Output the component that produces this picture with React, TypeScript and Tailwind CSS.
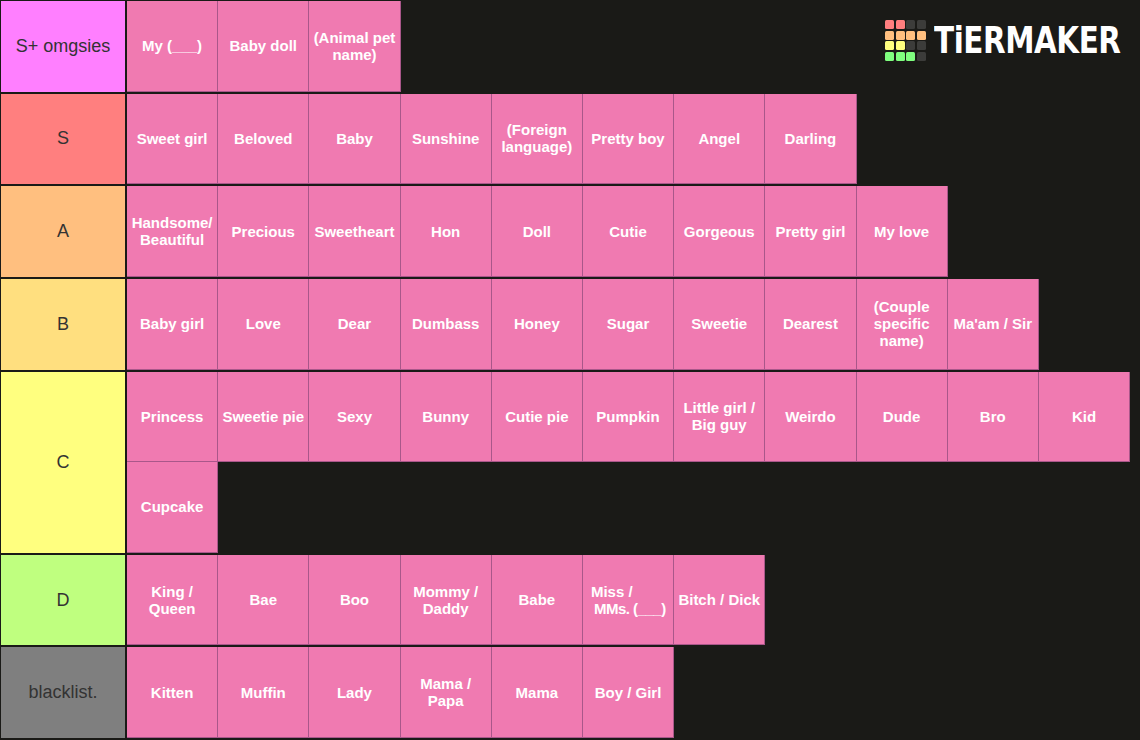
import React from 'react'

type Tier = {
  label: string
  color: string
  span: number
  items: React.ReactNode[]
}

const tiers: Tier[] = [
  { label: 'S+ omgsies', color: 'bg-[#ff7fff]', span: 1, items: ['My (___)', 'Baby doll', '(Animal pet name)'] },
  {
    label: 'S',
    color: 'bg-[#ff7f7f]',
    span: 1,
    items: ['Sweet girl', 'Beloved', 'Baby', 'Sunshine', '(Foreign language)', 'Pretty boy', 'Angel', 'Darling'],
  },
  {
    label: 'A',
    color: 'bg-[#ffbf7f]',
    span: 1,
    items: ['Handsome/ Beautiful', 'Precious', 'Sweetheart', 'Hon', 'Doll', 'Cutie', 'Gorgeous', 'Pretty girl', 'My love'],
  },
  {
    label: 'B',
    color: 'bg-[#ffdf7f]',
    span: 1,
    items: ['Baby girl', 'Love', 'Dear', 'Dumbass', 'Honey', 'Sugar', 'Sweetie', 'Dearest', '(Couple specific name)', "Ma'am / Sir"],
  },
  {
    label: 'C',
    color: 'bg-[#ffff7f]',
    span: 2,
    items: ['Princess', 'Sweetie pie', 'Sexy', 'Bunny', 'Cutie pie', 'Pumpkin', 'Little girl / Big guy', 'Weirdo', 'Dude', 'Bro', 'Kid', 'Cupcake'],
  },
  {
    label: 'D',
    color: 'bg-[#bfff7f]',
    span: 1,
    items: [
      'King / Queen',
      'Bae',
      'Boo',
      'Mommy / Daddy',
      'Babe',
      <span key="miss" className="block w-full pl-[6px] text-left">
        Miss /
        <br />
        <span className="pl-[3px] tracking-[-0.5px]">MMs. (___)</span>
      </span>,
      'Bitch / Dick',
    ],
  },
  {
    label: 'blacklist.',
    color: 'bg-[#7f7f7f]',
    span: 1,
    items: ['Kitten', 'Muffin', 'Lady', 'Mama / Papa', 'Mama', 'Boy / Girl'],
  },
]

const logoColors = [
  ['bg-[#ff7f7f]', 'bg-[#ff7f7f]', 'bg-[#3c3c3a]', 'bg-[#3c3c3a]'],
  ['bg-[#ffbf7f]', 'bg-[#ffbf7f]', 'bg-[#ffbf7f]', 'bg-[#ffbf7f]'],
  ['bg-[#ffff7f]', 'bg-[#ffff7f]', 'bg-[#3c3c3a]', 'bg-[#3c3c3a]'],
  ['bg-[#7fff7f]', 'bg-[#7fff7f]', 'bg-[#7fff7f]', 'bg-[#3c3c3a]'],
]

function Item({ children, half }: { children: React.ReactNode; half: boolean }) {
  return (
    <div
      className={`flex w-[91.2px] items-center justify-center border-r border-b border-[#a9578a] bg-[#f07ab1] px-[2px] text-center text-[15px] leading-[17px] font-bold text-white ${
        half ? 'h-1/2' : 'h-full'
      }`}
    >
      {children}
    </div>
  )
}

// watermark sits over the empty part of the first row
function Logo() {
  return (
    <div className="absolute top-[20px] left-[885px] flex items-center gap-[8px]">
      <div className="grid shrink-0 grid-cols-[repeat(4,9px)] grid-rows-[repeat(4,9px)] gap-[1.5px]">
        {logoColors.flat().map((c, i) => (
          <div key={i} className={`rounded-[1.5px] ${c}`} />
        ))}
      </div>
      <span
        className="origin-left scale-x-[0.86] text-[38px] leading-none font-black tracking-[-0.5px] text-white"
        style={{ fontFamily: '"DejaVu Sans Condensed", "DejaVu Sans", sans-serif' }}
      >
        TiERMAKER
      </span>
    </div>
  )
}

export default function App() {
  return (
    <div
      className="relative grid h-[740px] w-[1140px] grid-rows-[1fr_1fr_1fr_1fr_2fr_1fr_1fr] gap-y-[2px] overflow-hidden bg-[#1a1a17] pt-[1px] pb-[2px]"
      style={{ fontFamily: '"Liberation Sans", Arial, sans-serif' }}
    >
      {tiers.map((tier) => (
        <div key={tier.label} className="flex">
          <div
            className={`ml-[1px] flex w-[124px] shrink-0 items-center justify-center text-[18px] text-[#333333] ${tier.color}`}
          >
            {tier.label}
          </div>
          <div className="ml-[2px] flex flex-1 flex-wrap content-start">
            {tier.items.map((item, i) => (
              <Item key={i} half={tier.span === 2}>
                {item}
              </Item>
            ))}
          </div>
        </div>
      ))}
      <Logo />
    </div>
  )
}
